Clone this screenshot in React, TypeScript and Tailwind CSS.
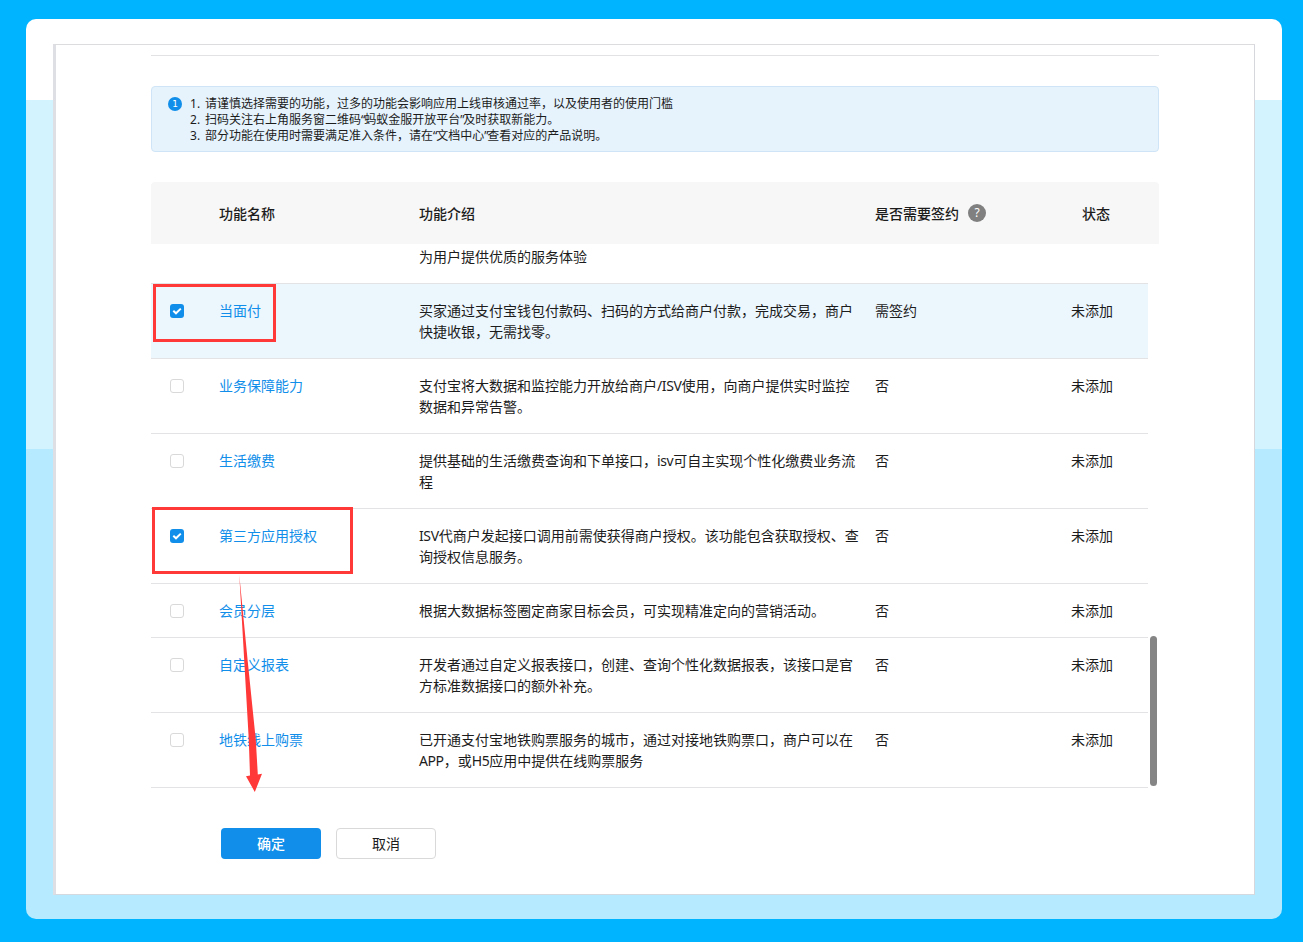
import React from "react";

type Feature = {
  name: string;
  lines: string[];
  sign: string;
  checked?: boolean;
  highlighted?: boolean;
};

const features: Feature[] = [
  {
    name: "当面付",
    lines: ["买家通过支付宝钱包付款码、扫码的方式给商户付款，完成交易，商户", "快捷收银，无需找零。"],
    sign: "需签约",
    checked: true,
    highlighted: true,
  },
  {
    name: "业务保障能力",
    lines: ["支付宝将大数据和监控能力开放给商户/ISV使用，向商户提供实时监控", "数据和异常告警。"],
    sign: "否",
  },
  {
    name: "生活缴费",
    lines: ["提供基础的生活缴费查询和下单接口，isv可自主实现个性化缴费业务流", "程"],
    sign: "否",
  },
  {
    name: "第三方应用授权",
    lines: ["ISV代商户发起接口调用前需使获得商户授权。该功能包含获取授权、查", "询授权信息服务。"],
    sign: "否",
    checked: true,
  },
  { name: "会员分层", lines: ["根据大数据标签圈定商家目标会员，可实现精准定向的营销活动。"], sign: "否" },
  {
    name: "自定义报表",
    lines: ["开发者通过自定义报表接口，创建、查询个性化数据报表，该接口是官", "方标准数据接口的额外补充。"],
    sign: "否",
  },
  {
    name: "地铁线上购票",
    lines: ["已开通支付宝地铁购票服务的城市，通过对接地铁购票口，商户可以在", "APP，或H5应用中提供在线购票服务"],
    sign: "否",
  },
];

const notices = [
  "请谨慎选择需要的功能，过多的功能会影响应用上线审核通过率，以及使用者的使用门槛",
  "扫码关注右上角服务窗二维码“蚂蚁金服开放平台”及时获取新能力。",
  "部分功能在使用时需要满足准入条件，请在“文档中心”查看对应的产品说明。",
];

const columns = "grid grid-cols-[68px_200px_456px_1fr]";

/** Chinese text whose Latin runs and quotation marks are set slightly tighter. */
function MixedText({ text }: { text: string }) {
  return (
    <>
      {text.split(/([A-Za-z0-9/]+|[“”])/).map((part, i) => {
        if (/^[“”]$/.test(part)) {
          return (
            <span key={i} className="tracking-[-1.2px]">
              {part}
            </span>
          );
        }
        if (/^[A-Za-z0-9/]+$/.test(part)) {
          return (
            <span key={i} className="tracking-[-0.4px]">
              {part}
            </span>
          );
        }
        return part;
      })}
    </>
  );
}

function Checkbox({ checked }: { checked?: boolean }) {
  return checked ? (
    <span className="flex h-3.5 w-3.5 items-center justify-center rounded-[3px] bg-[#108ee9]">
      <svg viewBox="0 0 14 14" className="h-3.5 w-3.5" fill="none" stroke="white" strokeWidth="2">
        <path d="M3.3 6.7 L6 9.3 L10.8 4.6" />
      </svg>
    </span>
  ) : (
    <span className="block h-3.5 w-3.5 rounded-[3px] border border-[#d9d9d9] bg-white" />
  );
}

function FeatureRow({ feature }: { feature: Feature }) {
  return (
    <div
      className={`${columns} border-b border-[#e3e3e5] py-4 leading-[21px] ${feature.highlighted ? "bg-[#ecf6fd]" : ""}`}
    >
      <div className="flex h-[21px] items-center pl-[19px]">
        <Checkbox checked={feature.checked} />
      </div>
      <div className="text-[#108ee9]">{feature.name}</div>
      <div className="whitespace-nowrap">
        {feature.lines.map((line) => (
          <p key={line}>
            <MixedText text={line} />
          </p>
        ))}
      </div>
      <div className="flex">
        <span className="w-[196px]">{feature.sign}</span>
        <span>未添加</span>
      </div>
    </div>
  );
}

export default function App() {
  return (
    <div className="relative h-[942px] w-[1303px] overflow-hidden bg-[#00b4ff] pl-[26px] pt-[19px] font-['Noto_Sans','Noto_Sans_CJK_SC',sans-serif] text-sm text-[#1c1c1c]">
      <div className="h-[900px] w-[1256px] rounded-[10px] bg-[linear-gradient(to_bottom,#fff_81px,#d3f3ff_81px,#d3f3ff_430px,#b5eaff_430px)] pl-[27px] pt-[25px]">
        <div className="h-[851px] w-[1202px] border-b border-l-[3px] border-r border-t border-b-[#d4d9df] border-l-[#dedfe5] border-r-[#d5d7dc] border-t-[#dcdcde] bg-white pl-[95px] pt-[10px]">
          <div className="w-[1008px]">
            <div className="border-t border-[#e2e2e4]" />
            <div className="mt-[30px] flex h-[66px] rounded border border-[#cfe5f7] bg-[#e6f3fc] pl-4 pt-[9px] text-xs leading-4">
              <span className="mt-[1px] flex h-3.5 w-3.5 items-center justify-center rounded-full bg-[#108ee9] font-['DejaVu_Sans',sans-serif] text-[9px] leading-none text-white">
                1
              </span>
              <ol className="ml-2 whitespace-nowrap">
                {notices.map((notice, i) => (
                  <li key={notice} className="flex">
                    <span className="w-[15px]">{i + 1}.</span>
                    <span>
                      <MixedText text={notice} />
                    </span>
                  </li>
                ))}
              </ol>
            </div>
            <div className={`${columns} mt-[30px] h-[62px] items-center rounded-t bg-[#f7f7f7] font-medium`}>
              <span />
              <span className="pt-0.5">功能名称</span>
              <span className="pt-0.5">功能介绍</span>
              <div className="flex items-center">
                <span className="pt-0.5">是否需要签约</span>
                <span className="ml-[9px] flex h-[18px] w-[18px] items-center justify-center rounded-full bg-[#808080] text-xs font-normal leading-none text-white">
                  ?
                </span>
                <span className="ml-24 pt-0.5">状态</span>
              </div>
            </div>
            <div className="flex justify-between">
              <div className="w-[997px]">
                <div className="border-b border-[#e3e3e5] pb-4 pl-[268px] pt-0.5 leading-[21px]">
                  为用户提供优质的服务体验
                </div>
                {features.map((feature) => (
                  <FeatureRow key={feature.name} feature={feature} />
                ))}
              </div>
              <div className="mb-0.5 mr-0.5 h-[150px] w-[7px] self-end rounded-full bg-[#858585]" />
            </div>
            <div className="mt-10 flex gap-[15px] pl-[70px]">
              <button className="h-[31px] w-[100px] rounded bg-[#108ee9] font-medium text-white">确定</button>
              <button className="h-[31px] w-[100px] rounded border border-[#d9d9d9] bg-white">取消</button>
            </div>
          </div>
        </div>
      </div>
      <div className="absolute left-[153px] top-[284px] h-[58px] w-[123px] border-[3px] border-[#ff3838]" />
      <div className="absolute left-[152px] top-[507px] h-[67px] w-[201px] border-[3px] border-[#ff3838]" />
      <svg className="absolute left-[230px] top-[574px] h-[220px] w-10" viewBox="0 0 40 220">
        <path d="M9.3 1 L17.6 86 L25.8 166 L27.8 200.5 L32 199.8 L24.8 218 L16 202.2 L20 201.5 L18.8 166 Z" fill="#ff3838" />
      </svg>
    </div>
  );
}
